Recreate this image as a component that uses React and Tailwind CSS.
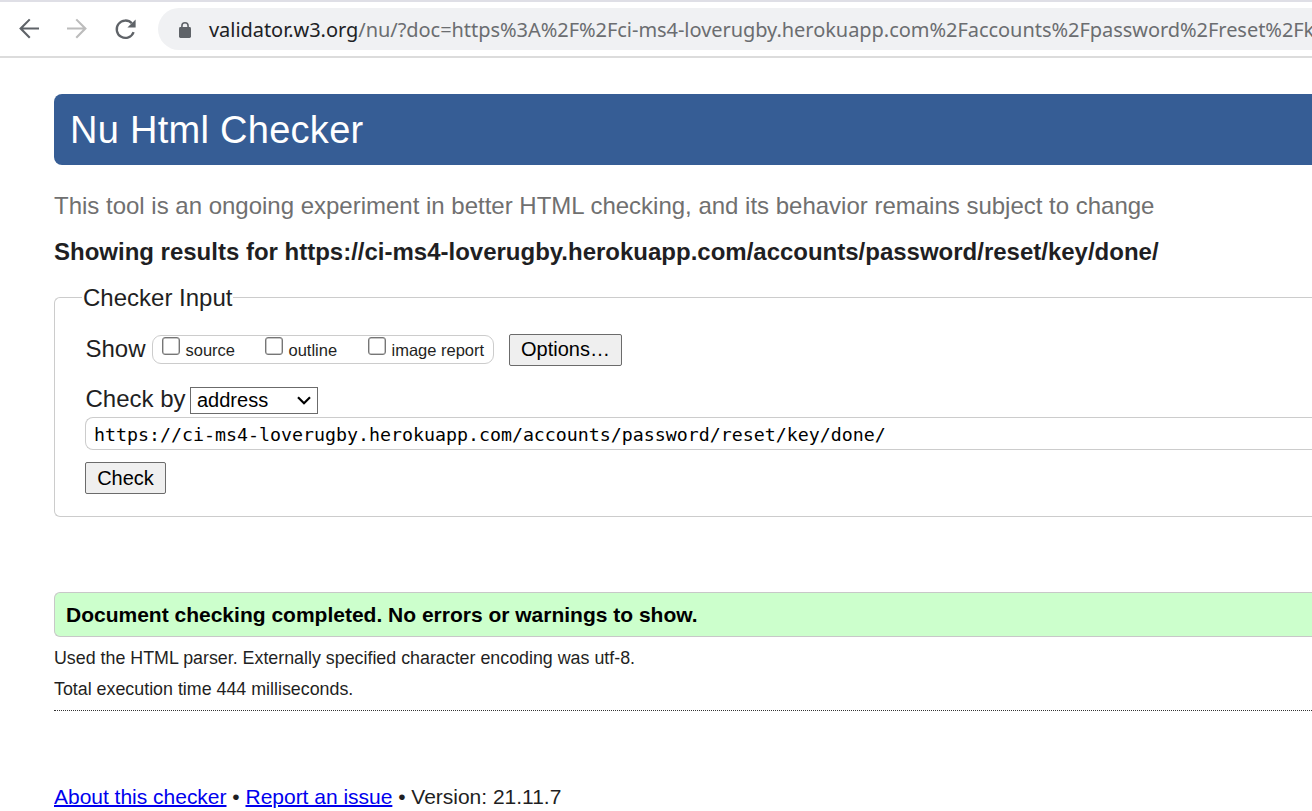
function Toolbar() {
  return (
    <header className="flex h-[58px] items-start overflow-hidden border-t-2 border-b-2 border-t-[#dfdfe6] border-b-[#dcdcdc] bg-white pt-[6px]">
      <div className="flex h-[42px] w-[158px] shrink-0 items-center">
        <svg viewBox="0 0 24 24" className="ml-[14px] size-[30px] shrink-0 -translate-y-[0.5px]" fill="#5f6368">
          <path d="M20 11.15H7.35l5.85-5.9L12 4.1 4.1 12l7.9 7.9 1.2-1.15-5.85-5.9H20z" />
        </svg>
        <svg viewBox="0 0 24 24" className="ml-[18px] size-[30px] shrink-0 -translate-y-[0.5px]" fill="#bcbcbc">
          <path d="M4 11.15h12.65l-5.85-5.9L12 4.1l7.9 7.9-7.9 7.9-1.2-1.15 5.85-5.9H4z" />
        </svg>
        <svg viewBox="0 0 31 31" className="ml-[18px] size-[31px] shrink-0" fill="none">
          <path d="M23.6 18.2A8.7 8.7 0 1 1 21.8 9.3" stroke="#5f6368" strokeWidth="2.3" />
          <path d="M25.6 5.4v8.2h-8.2z" fill="#5f6368" />
        </svg>
      </div>
      <div className="flex h-[42px] flex-1 items-center rounded-l-full bg-[#f0f1f3] pl-[21px]">
        <svg viewBox="0 0 12 16" className="mt-px h-4 w-3 shrink-0" fill="none">
          <rect x="0" y="5" width="12" height="11" rx="1.4" fill="#5f6368" />
          <path d="M2.9 6V3.9a3.1 3.1 0 0 1 6.2 0V6" stroke="#5f6368" strokeWidth="1.6" />
        </svg>
        <div className="ml-[18px] pt-[2px] whitespace-nowrap font-['Noto_Sans',sans-serif] text-[20px] leading-[40px] tracking-[-0.045px] text-[#6b6d70]">
          <span className="text-[#202124]">validator.w3.org</span>
          /nu/?doc=https%3A%2F%2Fci-ms4-loverugby.herokuapp.com%2Faccounts%2Fpassword%2Freset%2Fk
        </div>
      </div>
    </header>
  );
}

function Check({ label, className }) {
  return (
    <label className={`flex items-start ${className}`}>
      <input type="checkbox" className="mt-px size-[18px] shrink-0 appearance-none rounded-[3px] border border-[#767676] bg-white shadow-[inset_0_0_0_0.5px_#8f8f8f]" />
      <span className="ml-[5.5px] text-[16.5px] leading-[28px]">{label}</span>
    </label>
  );
}

const button = "flex h-8 shrink-0 items-center justify-center rounded-[2px] border border-[#6b6b6b] bg-[#efefef] text-[20px] text-black";

export default function App() {
  return (
    <div className="h-[811px] w-[1312px] overflow-hidden bg-white font-['Liberation_Sans',Arial,sans-serif] text-[#1f1f23]">
      <Toolbar />
      <main className="pl-[54px] pt-9 whitespace-nowrap">
        <h1 className="h-[71px] rounded-l-[8px] bg-[#365d95] pl-4 text-[38px] leading-[73px] tracking-[0.28px] text-white">Nu Html Checker</h1>
        <p className="mt-[27px] text-[24px] leading-[28px] tracking-[-0.006px] text-[#707070]">
          This tool is an ongoing experiment in better HTML checking, and its behavior remains subject to change
        </p>
        <h2 className="mt-[18px] text-[24px] font-bold leading-[28px] tracking-[-0.006px]">
          Showing results for https://ci-ms4-loverugby.herokuapp.com/accounts/password/reset/key/done/
        </h2>
        <fieldset className="mt-[18px] h-[233px] rounded-l-[6px] border border-r-0 border-[#cccccc] pl-[27px]">
          <legend className="h-[27px] px-px text-[24px] leading-[28px]">Checker Input</legend>
          <div className="pl-[3px]">
            <div className="mt-[23px] flex h-8 items-start">
              <span className="w-[67px] pl-[0.5px] text-[24px] leading-[30px]">Show</span>
              <div className="mt-px flex h-[29px] w-[342px] rounded-[9px] border border-[#cccccc] pl-[9px]">
                <Check label="source" className="w-[103px]" />
                <Check label="outline" className="w-[103px]" />
                <Check label="image report" className="" />
              </div>
              <button className={`${button} ml-[15px] w-[113px] pb-[2px] leading-[28px]`}>Options…</button>
            </div>
            <div className="mt-[21px] flex h-[27px] items-start">
              <span className="w-[105px] pl-[0.5px] text-[24px] leading-[24px]">Check by</span>
              <div className="flex h-[27px] w-32 items-center border border-[#6b6b6b] pl-[6px] pr-[6px] text-[20px] leading-[25px] text-black">
                <span className="flex-1">address</span>
                <svg viewBox="0 0 14 10" className="h-[10px] w-[14px]" fill="none" stroke="#000" strokeWidth="2.2">
                  <path d="M1 1.3 7 7.3l6-6" />
                </svg>
              </div>
            </div>
            <div className="mt-[3px] h-[33px] rounded-l-[8px] border border-r-0 border-[#cccccc] pl-2 font-['DejaVu_Sans_Mono',monospace] text-[18.27px] leading-[33px] text-black">
              https://ci-ms4-loverugby.herokuapp.com/accounts/password/reset/key/done/
            </div>
            <button className={`${button} mt-3 w-[81px] leading-[30px]`}>Check</button>
          </div>
        </fieldset>
        <p className="mt-[75px] h-[45px] rounded-l-[6px] border border-r-0 border-[#c8c8c8] bg-[#ccffcc] pl-[11px] text-[21px] font-bold leading-[44px] text-black">
          Document checking completed. No errors or warnings to show.
        </p>
        <div className="border-b border-dotted border-[#333] pb-[5px] pt-[6px] text-[17.83px] leading-[31px]">
          <p>Used the HTML parser. Externally specified character encoding was utf-8.</p>
          <p>Total execution time 444 milliseconds.</p>
        </div>
        <footer className="mt-[73px] text-[21px] leading-[26px] tracking-[-0.015px]">
          <a href="#about" className="text-[#0000ee] underline decoration-2">About this checker</a> •{" "}
          <a href="#issue" className="text-[#0000ee] underline decoration-2">Report an issue</a> • Version: 21.11.7
        </footer>
      </main>
    </div>
  );
}
